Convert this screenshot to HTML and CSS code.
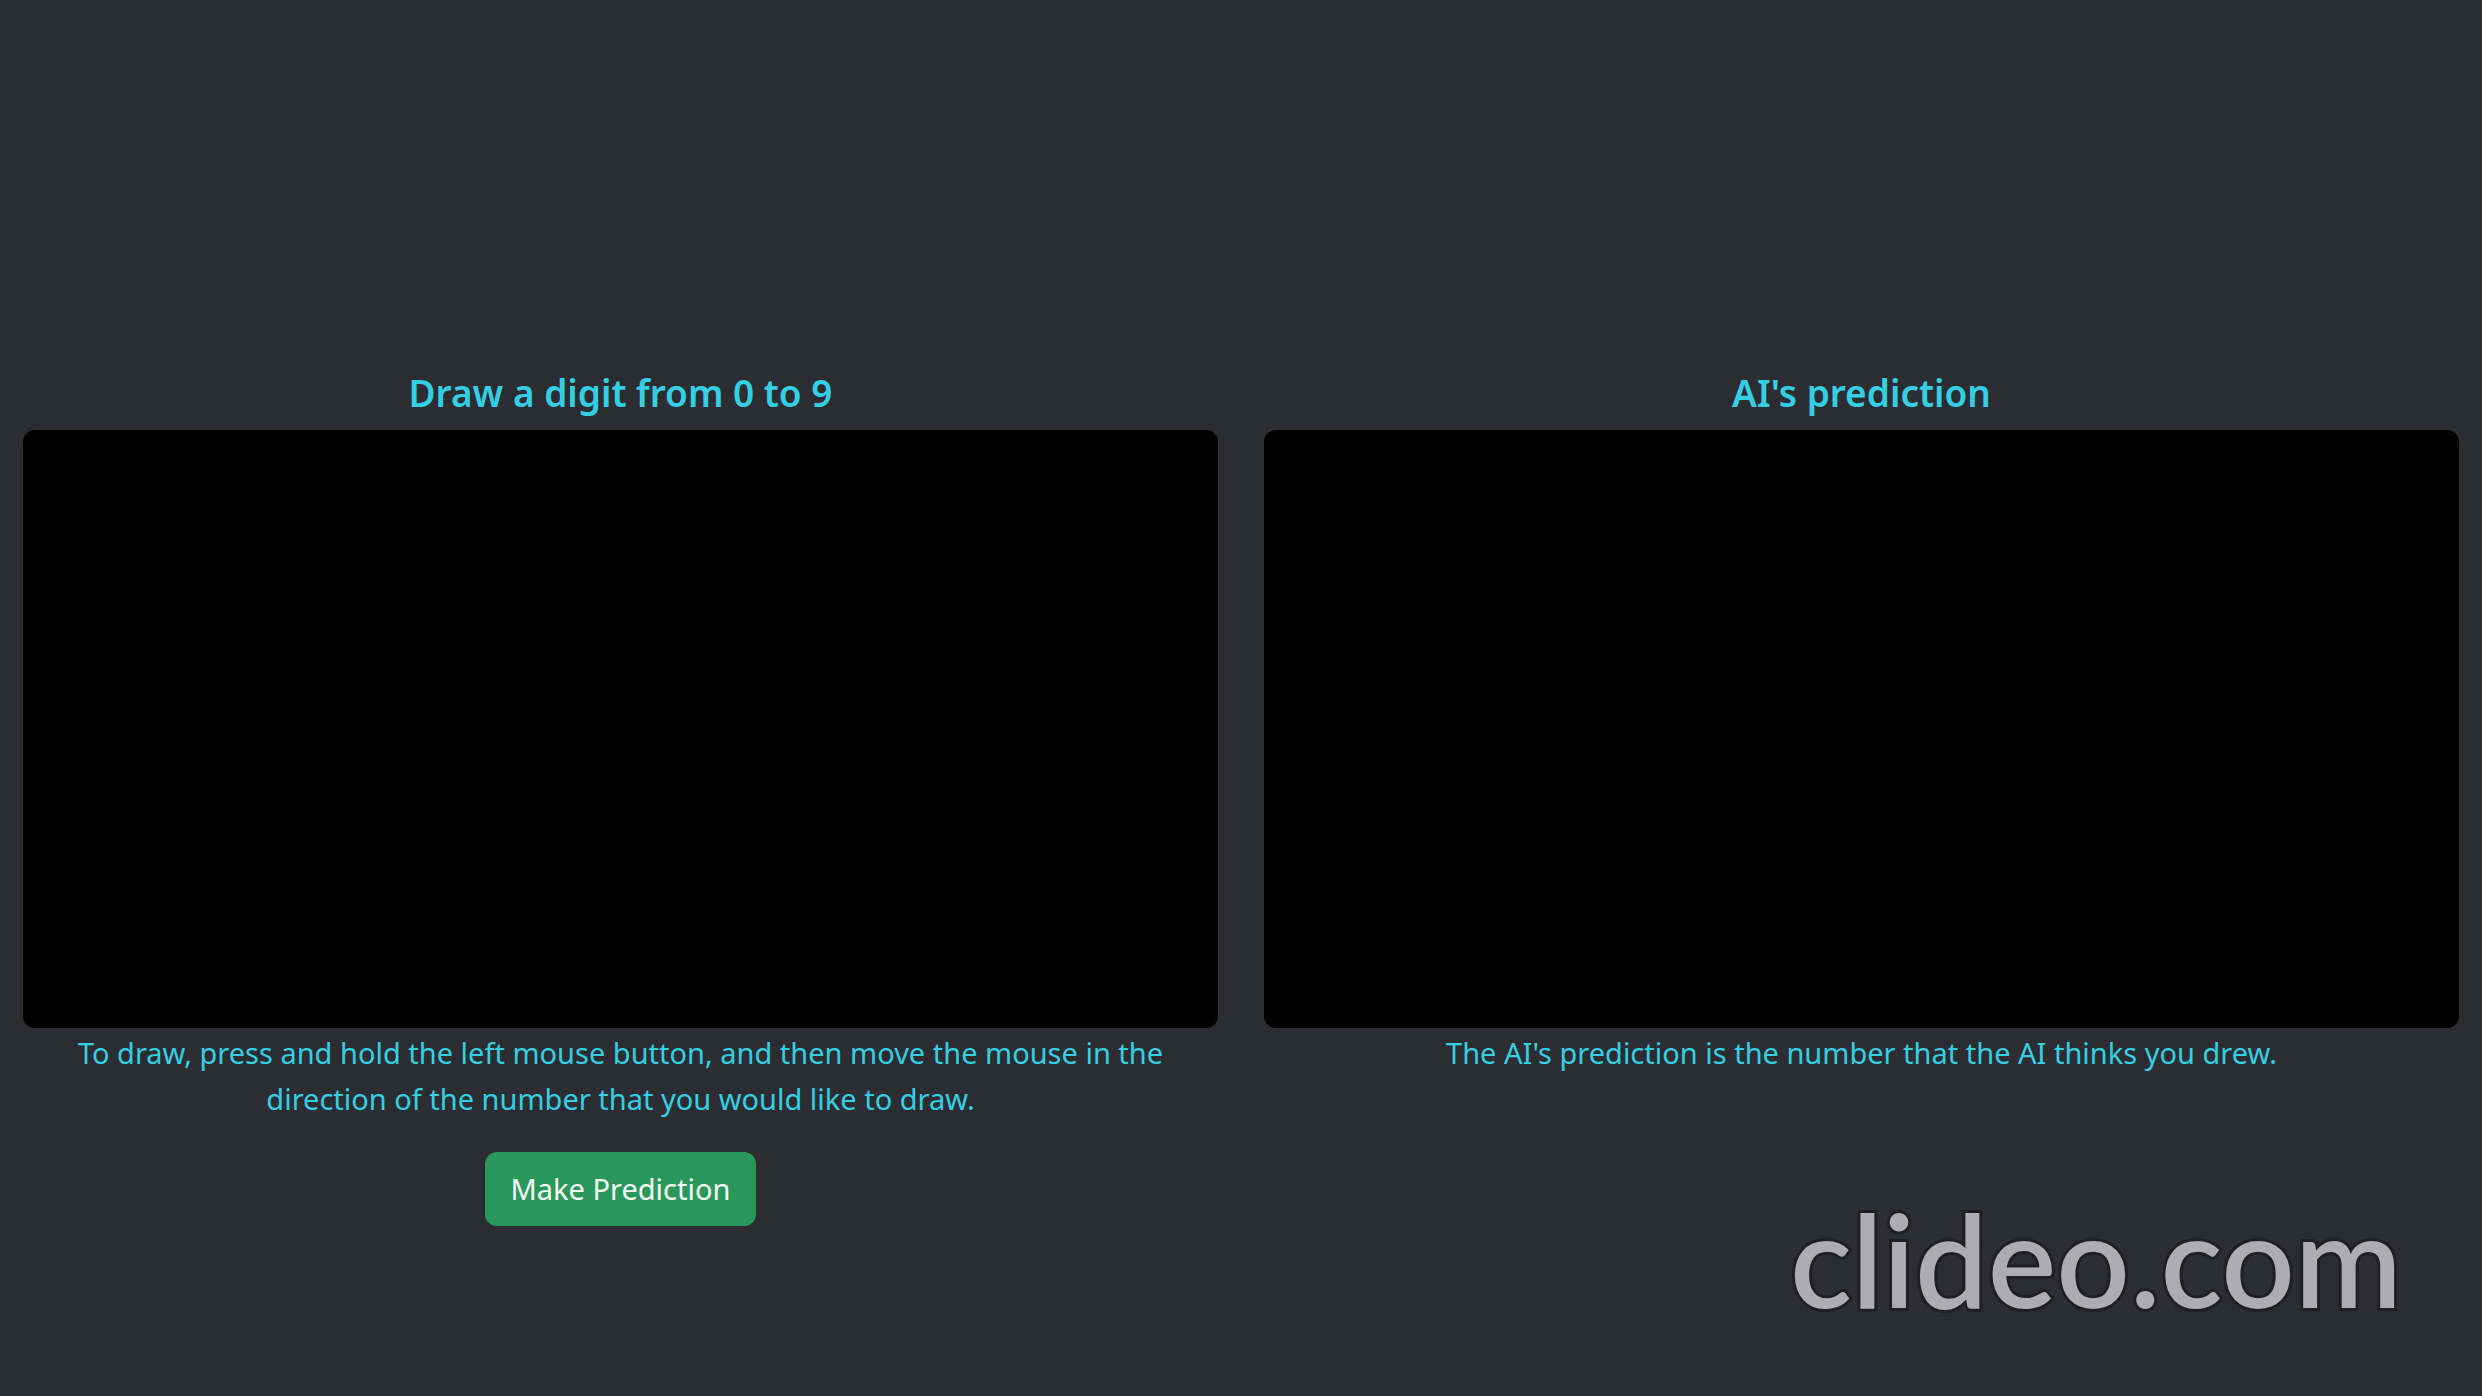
FILE: index.html
```html
<!DOCTYPE html>
<html lang="en">
<head>
  <meta charset="utf-8">
  <meta name="viewport" content="width=device-width, initial-scale=1">
  <title>Digit prediction</title>
  <link rel="stylesheet" href="styles.css">
</head>
<body>
  <main class="panels">
    <section class="panel">
      <h1 class="panel-title" id="draw-title">Draw a digit from 0 to 9</h1>
      <canvas class="board" aria-labelledby="draw-title"></canvas>
      <p class="panel-text">To draw, press and hold the left mouse button, and then move the mouse in the direction of the number that you would like to draw.</p>
      <button class="predict" type="button">Make Prediction</button>
    </section>
    <section class="panel">
      <h2 class="panel-title" id="result-title">AI's prediction</h2>
      <canvas class="board" aria-labelledby="result-title"></canvas>
      <p class="panel-text">The AI's prediction is the number that the AI thinks you drew.</p>
    </section>
  </main>
  <div class="watermark">clideo.com</div>
</body>
</html>
```

FILE: styles.css
```css
* {
  box-sizing: border-box;
}

body {
  margin: 0;
  min-height: 100vh;
  background: #2c2d32;
  color: #34cfe2;
  font-family: "Segoe UI", "Noto Sans", "Open Sans", sans-serif;
  font-size: 29px;
  line-height: 46px;
}

.panels {
  display: grid;
  grid-template-columns: 1fr 1fr;
  padding-top: 370px;
}

.panel {
  display: flex;
  flex-direction: column;
  align-items: center;
  padding: 0 23px;
  text-align: center;
}

.panel-title {
  margin: 0 0 14px;
  font-size: 37px;
  font-weight: 600;
  line-height: 46px;
}

.board {
  width: 100%;
  aspect-ratio: 2 / 1;
  border-radius: 12px;
  background: #000;
}

.panel-text {
  margin: 2px 0 30px;
  padding: 0 24px;
}

.predict {
  padding: 14px 26px;
  border: 0;
  border-radius: 12px;
  background: #2b985b;
  color: #f4fbf7;
  font: inherit;
}

.watermark {
  position: absolute;
  right: 80px;
  bottom: 72px;
  color: #adadaf;
  font-family: Lato, sans-serif;
  font-size: 129px;
  font-weight: 600;
  line-height: 132px;
  -webkit-text-stroke: 6px #1f2022;
  paint-order: stroke fill;
}
```
